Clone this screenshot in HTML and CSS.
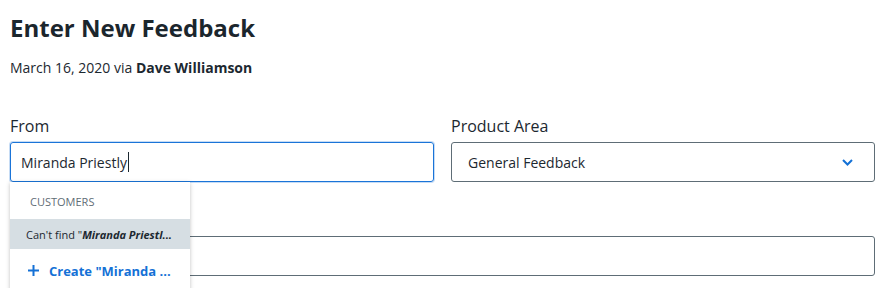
FILE: index.html
```html
<!DOCTYPE html>
<html lang="en">
<head>
  <meta charset="UTF-8">
  <title>Enter New Feedback</title>
  <link rel="stylesheet" href="styles.css">
</head>
<body>

<div class="page">
  <h1>Enter New Feedback</h1>
  <p class="meta">March 16, 2020 via <b>Dave Williamson</b></p>

  <div class="row">
    <div class="field">
      <label>From</label>
      <div class="input focus">Miranda Priestly<span class="caret"></span></div>

      <div class="menu">
        <div class="menu-head">CUSTOMERS</div>
        <div class="menu-item active">Can't find "<b><i>Miranda Priestl...</i></b></div>
        <div class="menu-item create">
          <svg width="11" height="11" viewBox="0 0 11 11"><path d="M5.5 0v11M0 5.5h11" stroke="#1471d6" stroke-width="2"/></svg>
          Create "Miranda ...
        </div>
      </div>
    </div>

    <div class="field">
      <label>Product Area</label>
      <div class="input select">
        General Feedback
        <svg class="chev" width="11" height="7" viewBox="0 0 11 7"><path d="M1 1l4.5 4.5L10 1" fill="none" stroke="#1471d6" stroke-width="2"/></svg>
      </div>
    </div>
  </div>

  <div class="field wide">
    <label class="empty"></label>
    <div class="input"></div>
  </div>
</div>

</body>
</html>
```

FILE: styles.css
```css
body {
  margin: 0;
  font-family: "Open Sans", Arial, sans-serif;
  color: #1c2830;
  background-color: #fff;
}

.page {
  padding: 12px 10px;
}

h1 {
  margin: 0;
  font-size: 24px;
  line-height: 32px;
  font-weight: 700;
  color: #1b262d;
}

.meta {
  margin: 14px 0 0;
  font-size: 14px;
  line-height: 20px;
}

.row {
  display: flex;
  gap: 17px;
  margin-top: 36px;
}

.field {
  position: relative;
  flex: 1;
}

.field.wide {
  margin-top: 26px;
}

label {
  display: block;
  font-size: 16px;
  line-height: 24px;
  margin-bottom: 4px;
}

label.empty {
  height: 24px;
}

.input {
  display: flex;
  align-items: center;
  height: 40px;
  padding: 0 10px;
  border: 1px solid #5e6d76;
  border-radius: 3px;
  box-sizing: border-box;
  font-size: 14px;
}

.input.focus {
  border-color: #1a74d8;
  box-shadow: 0 0 0 1px rgba(26, 116, 216, 0.25);
}

.caret {
  display: inline-block;
  width: 1px;
  height: 20px;
  background-color: #1c2830;
  margin-left: 1px;
}

.input.select {
  justify-content: space-between;
  padding: 0 21px 0 16px;
}

.menu {
  position: absolute;
  top: 100%;
  left: 0;
  width: 180px;
  background-color: #fff;
  box-shadow: 0 1px 4px rgba(0, 0, 0, 0.25);
  z-index: 2;
}

.menu-head {
  padding: 11px 20px 8px;
  font-size: 11px;
  line-height: 18px;
  color: #5f6d76;
}

.menu-item {
  display: flex;
  align-items: center;
  height: 30px;
  padding: 0 16px;
  font-size: 11px;
  white-space: nowrap;
}

.menu-item.active {
  background-color: #d6dee3;
}

.menu-item.create {
  height: 43px;
  gap: 10px;
  padding-left: 18px;
  font-size: 13px;
  font-weight: 700;
  color: #1471d6;
}
```
